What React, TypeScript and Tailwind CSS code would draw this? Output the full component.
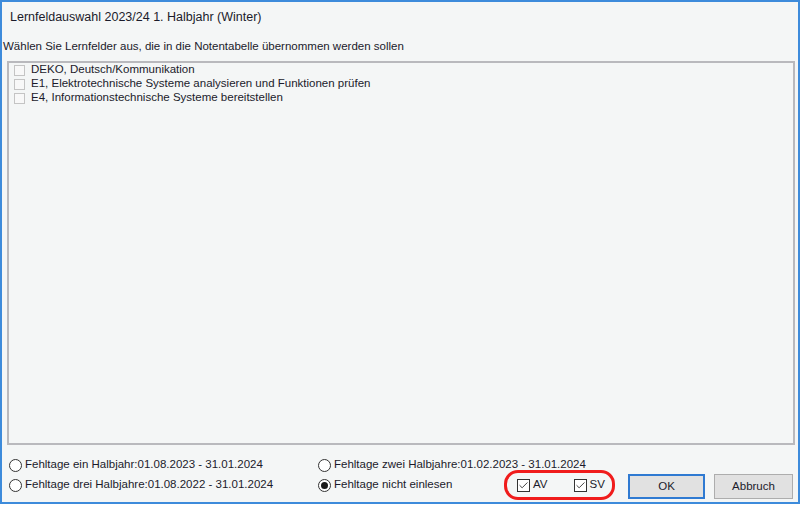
import { Check } from "lucide-react";

const felder = [
  "DEKO, Deutsch/Kommunikation",
  "E1, Elektrotechnische Systeme analysieren und Funktionen prüfen",
  "E4, Informationstechnische Systeme bereitstellen",
];

function Radio({ label, checked = false }: { label: string; checked?: boolean }) {
  return (
    <label className="flex h-[20px] items-center gap-[3px] whitespace-nowrap">
      <span className="flex h-[13px] w-[13px] shrink-0 items-center justify-center rounded-full border border-[#333] bg-white">
        {checked && <span className="h-[7px] w-[7px] rounded-full bg-[#1a1a1a]" />}
      </span>
      <span>{label}</span>
    </label>
  );
}

function CheckBox({ label }: { label: string }) {
  return (
    <label className="flex items-center gap-[3px]">
      <span className="flex h-[13px] w-[13px] items-center justify-center border border-[#333] bg-white">
        <Check size={11} strokeWidth={2} className="text-[#333]" />
      </span>
      <span>{label}</span>
    </label>
  );
}

export default function App() {
  return (
    <div className="h-[507px] w-[800px] bg-white font-['Liberation_Sans',Arial,sans-serif] text-[11.5px] text-[#1b1b2b]">
      <div className="flex h-[504px] flex-col border-2 border-[#3d8bdb] bg-[#f4f6f6] pl-[1px] pr-[3px]">
        <div className="h-[30px] pl-[7px] text-[12.5px] leading-[30px]">
          Lernfeldauswahl 2023/24 1. Halbjahr (Winter)
        </div>
        <div className="h-[29px] leading-[29px]">
          Wählen Sie Lernfelder aus, die in die Notentabelle übernommen werden sollen
        </div>

        {/* Lernfeld list */}
        <div className="ml-[4px] h-[384px] border-2 border-[#b9b9bd] bg-[#f4f6f6] pl-[5px]">
          {felder.map((f) => (
            <div key={f} className="flex h-[14px] items-center gap-[6px]">
              <span className="h-[11px] w-[11px] border border-[#c4c4c4] bg-[#f8f8f8]" />
              <span>{f}</span>
            </div>
          ))}
        </div>

        <div className="flex h-[56px] items-end pl-[6px]">
          <div className="grid grid-cols-[309px_186px] self-start pt-[10px]">
            <Radio label="Fehltage ein Halbjahr:01.08.2023 - 31.01.2024" />
            <Radio label="Fehltage zwei Halbjahre:01.02.2023 - 31.01.2024" />
            <Radio label="Fehltage drei Halbjahre:01.08.2022 - 31.01.2024" />
            <Radio label="Fehltage nicht einlesen" checked />
          </div>

          <div className="mb-[1px] flex h-[30px] w-[111px] items-center gap-[26px] rounded-[14px] border-[3px] border-[#f01c1c] pl-[10px]">
            <CheckBox label="AV" />
            <CheckBox label="SV" />
          </div>

          <div className="mb-[2px] ml-[13px] flex gap-[9px]">
            <button className="h-[25px] w-[77px] border-2 border-[#2f7ad2] bg-[#e1e1e1]">OK</button>
            <button className="h-[25px] w-[79px] border border-[#adadad] bg-[#e1e1e1]">Abbruch</button>
          </div>
        </div>
      </div>
    </div>
  );
}
